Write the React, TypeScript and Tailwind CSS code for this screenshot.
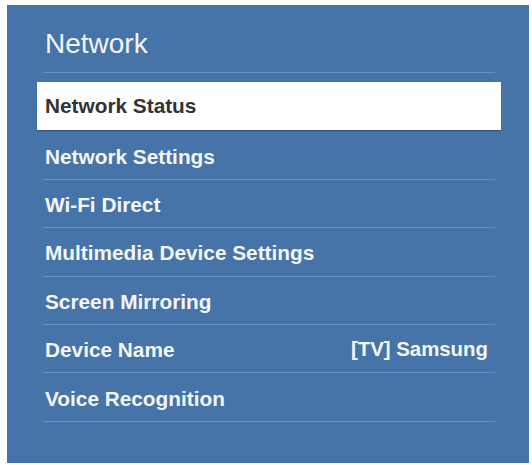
import React from "react";

const rows: { label: string; value?: string }[] = [
  { label: "Network Settings" },
  { label: "Wi-Fi Direct" },
  { label: "Multimedia Device Settings" },
  { label: "Screen Mirroring" },
  { label: "Device Name", value: "[TV] Samsung" },
  { label: "Voice Recognition" },
];

export default function App() {
  return (
    <div
      className="w-[532px] h-[465px] bg-white pt-[5px] pl-[7px]"
      style={{ fontFamily: '"Liberation Sans", Arial, sans-serif' }}
    >
      <div className="w-[522px] h-[458px] bg-[#4673a8] pl-[30px] pr-[28px] pt-[22.5px]">
        <div className="mx-[6px] border-b border-[#6a8fbe] pb-[12px]">
          <div className="text-[28px] leading-[32px] text-[#f3f6fa] pl-[2px]">Network</div>
        </div>
        <div className="mt-[9px] h-[48px] bg-white flex items-center pl-[8px] shadow-[0_1px_1px_rgba(0,0,0,0.25)] mb-[2px]">
          <span className="text-[20.8px] font-bold text-[#333333] pt-[1px]">Network Status</span>
        </div>
        {rows.map((r) => (
          <div
            key={r.label}
            className="mx-[6px] h-[48.4px] border-b border-[#6a8fbe] flex items-center justify-between pl-[2px] pr-[7px]"
          >
            <span className="text-[20.8px] font-bold text-[#f3f6fa] pt-[2px]">{r.label}</span>
            {r.value && (
              <span className="text-[20.4px] font-bold text-[#f3f6fa] pt-[2px]">{r.value}</span>
            )}
          </div>
        ))}
      </div>
    </div>
  );
}
